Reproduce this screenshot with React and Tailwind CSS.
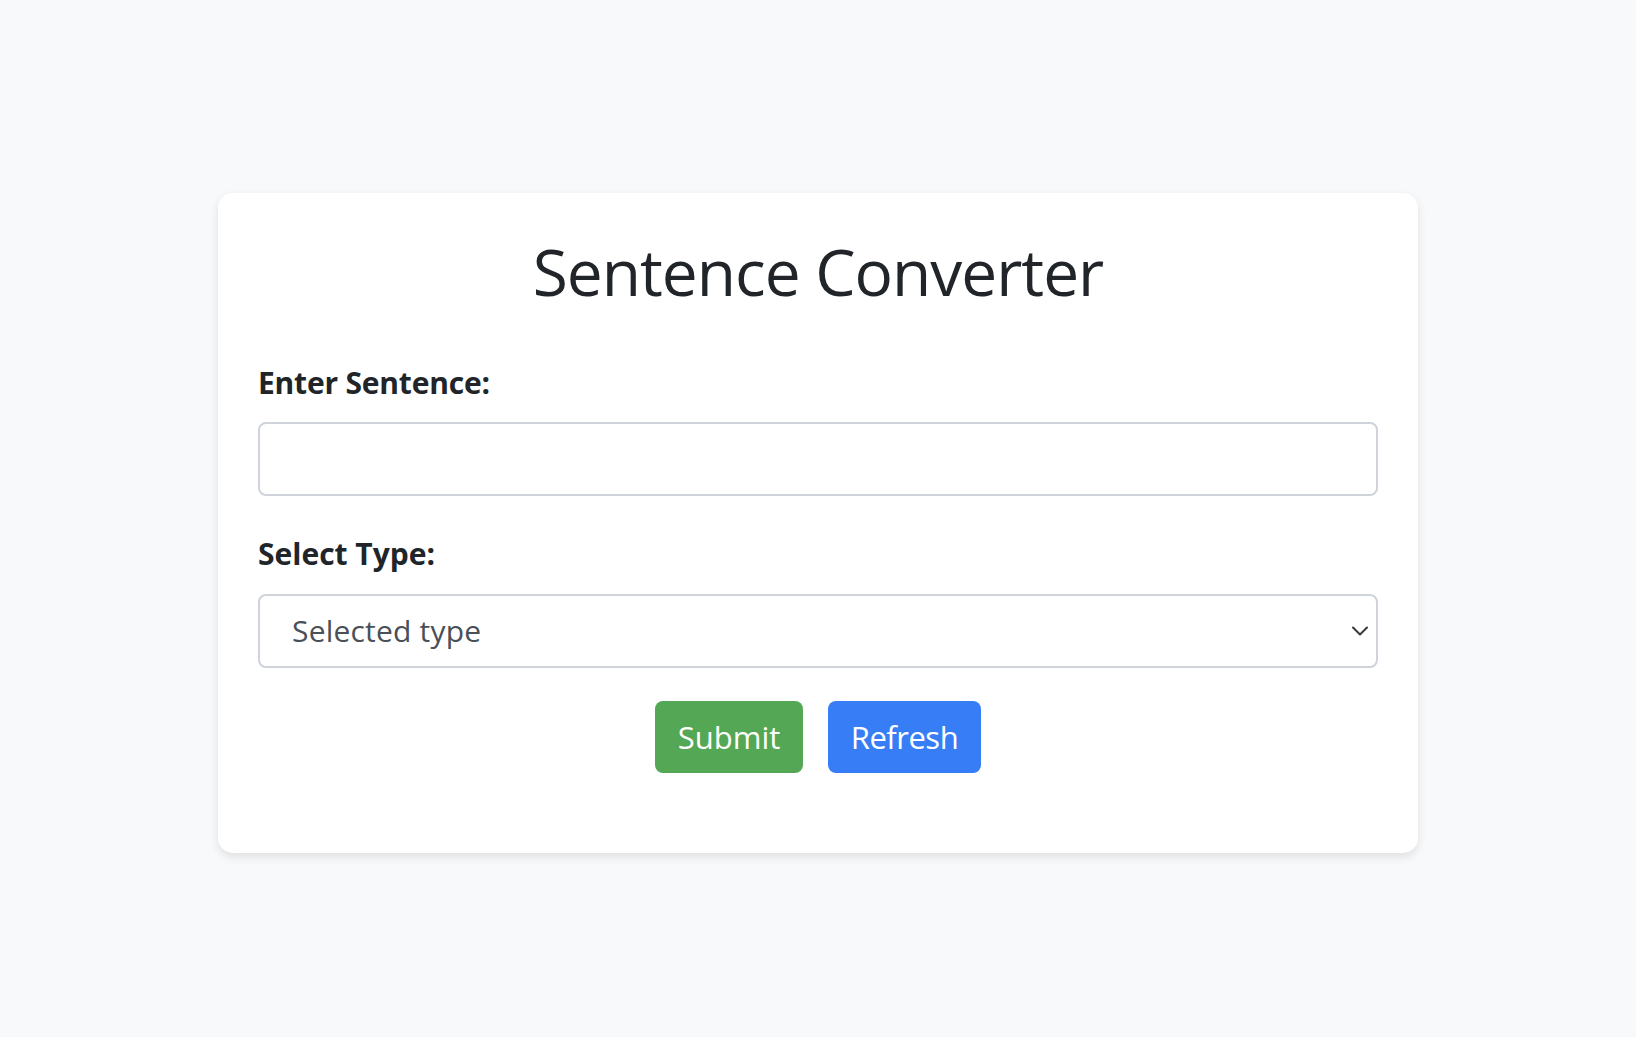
import { useState } from "react";

const App = () => {
  const [sentence, setSentence] = useState("");
  const [type, setType] = useState("");

  const typeOptions = ["Uppercase", "Lowercase", "Title Case"];

  return (
    <div
      className="min-h-screen bg-[#f8f9fa] pt-[193px]"
      style={{ fontFamily: '"Open Sans", "Noto Sans", sans-serif' }}
    >
      <div className="mx-auto w-[1200px] h-[660px] bg-white rounded-[15px] shadow-[0_4px_10px_rgba(0,0,0,0.1)] px-[40px] pt-[41px] text-[#212529]">
        <h1 className="text-center text-[64px] leading-[1.2] tracking-[-1px] font-[450]">
          Sentence Converter
        </h1>

        {/* Sentence input */}
        <label className="block mt-[49px] text-[30px] leading-[1.5] font-bold tracking-[-0.2px]">
          Enter Sentence:
        </label>
        <input
          type="text"
          value={sentence}
          onChange={(e) => setSentence(e.target.value)}
          className="mt-[17px] block w-full h-[74px] border-2 border-[#ced4da] rounded-[8px] px-[32px] text-[30px] outline-none"
        />

        {/* Type select */}
        <label className="block mt-[35px] text-[30px] leading-[1.5] font-bold tracking-[0px]">
          Select Type:
        </label>
        <div className="relative mt-[18px]">
          <select
            value={type}
            onChange={(e) => setType(e.target.value)}
            className="block w-full h-[74px] appearance-none bg-white border-2 border-[#ced4da] rounded-[8px] pl-[32px] pr-[60px] text-[30px] tracking-[0.2px] text-[#495057] outline-none"
          >
            <option value="">Selected type</option>
            {typeOptions.map((t) => (
              <option key={t} value={t}>
                {t}
              </option>
            ))}
          </select>
          <svg
            className="absolute right-[10px] top-[29px] w-[16px] h-[16px] pointer-events-none"
            viewBox="0 0 16 16"
            fill="none"
            stroke="#343a40"
            strokeWidth="2"
            strokeLinecap="round"
            strokeLinejoin="round"
          >
            <path d="M1 4.5l7 7 7-7" />
          </svg>
        </div>

        {/* Buttons */}
        <div className="mt-[33px] flex justify-center gap-[25px]">
          <button className="h-[72px] w-[148px] rounded-[8px] bg-[#54a754] text-white text-[31px]">
            Submit
          </button>
          <button className="h-[72px] w-[153px] rounded-[8px] bg-[#377df5] text-white text-[31px] tracking-[-0.5px]">
            Refresh
          </button>
        </div>
      </div>
    </div>
  );
};

export default App;
